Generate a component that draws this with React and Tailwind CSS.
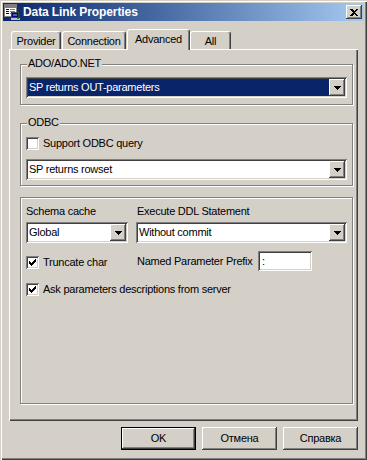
import React from 'react';

const raised = 'shadow-[inset_-1px_-1px_#404040,inset_1px_1px_#ffffff,inset_-2px_-2px_#808080,inset_2px_2px_#d4d0c8]';
const sunken = 'shadow-[inset_1px_1px_#808080,inset_-1px_-1px_#ffffff,inset_2px_2px_#404040,inset_-2px_-2px_#d4d0c8]';

function TitleIcon() {
    return (
        <svg width="16" height="16" viewBox="0 0 16 16" shapeRendering="crispEdges">
            <rect x="0.5" y="0.5" width="12" height="12" fill="#ffffff" stroke="#808080" />
            <rect x="1" y="1" width="11" height="3" fill="#808080" />
            <rect x="2" y="5" width="3" height="1" fill="#000080" />
            <rect x="6" y="5" width="5" height="1" fill="#808080" />
            <rect x="2" y="7" width="3" height="1" fill="#000080" />
            <rect x="6" y="7" width="5" height="1" fill="#808080" />
            <rect x="2" y="9" width="3" height="1" fill="#000080" />
            <rect x="6" y="9" width="3" height="1" fill="#808080" />
            <rect x="7.5" y="8.5" width="7" height="5" fill="#0000a0" stroke="#404040" />
            <rect x="9" y="10" width="4" height="2" fill="#3a6ea5" />
            <rect x="7" y="14" width="9" height="2" fill="#c0c0c0" />
            <rect x="13" y="14" width="2" height="1" fill="#00a000" />
        </svg>
    );
}

function Arrow() {
    return (
        <svg width="7" height="4" viewBox="0 0 7 4" shapeRendering="crispEdges">
            <polygon points="0,0 7,0 3.5,4" fill="#000000" />
        </svg>
    );
}

function Combo({ value, active }) {
    return (
        <div className={`flex h-[21px] items-stretch bg-white p-[2px] ${sunken}`}>
            <div className={`flex flex-1 items-center pl-[1px] ${active ? 'bg-[#0a246a] text-white' : 'text-black'}`}>
                {value}
            </div>
            <div className={`flex w-[16px] items-center justify-center bg-[#d4d0c8] ${raised}`}>
                <Arrow />
            </div>
        </div>
    );
}

function Check({ checked, label }) {
    return (
        <div className="flex h-[13px] items-center gap-[4px]">
            <div className={`flex h-[13px] w-[13px] shrink-0 items-center justify-center bg-white ${sunken}`}>
                {checked && (
                    <svg width="7" height="7" viewBox="0 0 7 7" shapeRendering="crispEdges">
                        <path d="M0 2h1v1h1v1h1V3h1V2h1V1h1V0h1v3H6v1H5v1H4v1H3v1H2V6H1V5H0z" fill="#000000" />
                    </svg>
                )}
            </div>
            <span className="whitespace-nowrap leading-[13px]">{label}</span>
        </div>
    );
}

function Group({ label, className, children }) {
    return (
        <div className={`relative border border-[#808080] shadow-[inset_1px_1px_#ffffff,1px_1px_#ffffff] ${className}`}>
            {label && (
                <span className="absolute -top-[8px] left-[6px] bg-[#d4d0c8] px-[1px] leading-[13px]">{label}</span>
            )}
            {children}
        </div>
    );
}

function Tab({ label, width, active }) {
    return (
        <div
            className={`flex justify-center rounded-t-[3px] border-l border-t border-r border-l-white border-t-white border-r-[#404040] bg-[#d4d0c8] pt-[3px] leading-[13px] shadow-[inset_-1px_0_#808080] ${width} ${active ? 'relative z-10 -mb-[1px] h-[21px]' : 'h-[18px]'}`}
        >
            {label}
        </div>
    );
}

function Button({ label, primary }) {
    return (
        <div className={`h-[23px] w-[75px] ${primary ? 'border border-black' : ''}`}>
            <div className={`flex h-full w-full items-center justify-center bg-[#d4d0c8] ${raised}`}>{label}</div>
        </div>
    );
}

export default function App() {
    return (
        <div className="flex h-[460px] w-[367px] flex-col bg-[#d4d0c8] p-[3px] font-['Liberation_Sans',Arial,sans-serif] text-[11px] tracking-[-0.25px] text-black shadow-[inset_1px_1px_#d4d0c8,inset_2px_2px_#ffffff,inset_-1px_-1px_#404040,inset_-2px_-2px_#808080]">
            <div className="flex h-[18px] items-center bg-linear-to-r from-[#0a246a] to-[#a6caf0] pl-[1px] pr-[2px]">
                <TitleIcon />
                <span className="ml-[3px] flex-1 text-[12px] font-bold tracking-[-0.1px] text-white">Data Link Properties</span>
                <div className={`flex h-[14px] w-[16px] items-center justify-center bg-[#d4d0c8] ${raised}`}>
                    <svg width="8" height="7" viewBox="0 0 8 7" shapeRendering="crispEdges">
                        <path d="M0 0h2l2 2 2-2h2L5 3.5 8 7H6L4 5 2 7H0l3-3.5z" fill="#000000" />
                    </svg>
                </div>
            </div>

            <div className="flex flex-col px-[6px]">
                <div className="mt-[8px] flex h-[20px] items-end pl-[2px]">
                    <Tab label="Provider" width="w-[50px]" />
                    <div className="w-[1px]" />
                    <Tab label="Connection" width="w-[64px]" />
                    <div className="w-[1px]" />
                    <Tab label="Advanced" width="w-[63px]" active />
                    <Tab label="All" width="w-[41px]" />
                </div>

                <div className="flex h-[372px] flex-col pl-[11px] pr-[5px] pt-[15px] shadow-[inset_1px_1px_#ffffff,inset_-1px_-1px_#404040,inset_-2px_-2px_#808080]">
                    <Group label="ADO/ADO.NET" className="h-[41px] px-[5px] pt-[12px]">
                        <Combo value="SP returns OUT-parameters" active />
                    </Group>

                    <Group label="ODBC" className="mt-[18px] h-[63px] px-[5px] pt-[13px]">
                        <Check label="Support ODBC query" />
                        <div className="mt-[9px]">
                            <Combo value="SP returns rowset" />
                        </div>
                    </Group>

                    <Group className="mt-[11px] h-[207px] px-[5px] pt-[7px]">
                        <div className="grid grid-cols-[102px_1fr] gap-x-[8px]">
                            <span className="leading-[13px]">Schema cache</span>
                            <span className="pl-[1px] leading-[13px]">Execute DDL Statement</span>
                            <div className="mt-[4px]">
                                <Combo value="Global" />
                            </div>
                            <div className="mt-[4px]">
                                <Combo value="Without commit" />
                            </div>
                        </div>
                        <div className="mt-[8px] grid h-[20px] grid-cols-[102px_1fr] gap-x-[8px]">
                            <div className="pt-[5px]">
                                <Check checked label="Truncate char" />
                            </div>
                            <div className="flex items-start pl-[1px]">
                                <span className="w-[121px] whitespace-nowrap pt-[4px] leading-[13px]">Named Parameter Prefix</span>
                                <div className={`flex h-[20px] w-[54px] items-center bg-white pl-[4px] ${sunken}`}>:</div>
                            </div>
                        </div>
                        <div className="mt-[12px]">
                            <Check checked label="Ask parameters descriptions from server" />
                        </div>
                    </Group>
                </div>

                <div className="mt-[6px] flex justify-end gap-[6px]">
                    <Button label="OK" primary />
                    <Button label="Отмена" />
                    <Button label="Справка" />
                </div>
            </div>
        </div>
    );
}
